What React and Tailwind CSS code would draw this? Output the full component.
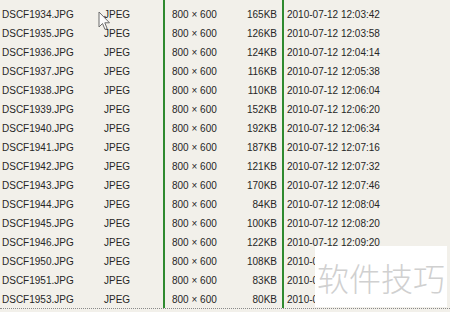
import React from 'react';

const rows = [
  { name: 'DSCF1933.JPG', size: '98KB', time: '12:03:26' },
  { name: 'DSCF1934.JPG', size: '165KB', time: '12:03:42' },
  { name: 'DSCF1935.JPG', size: '126KB', time: '12:03:58' },
  { name: 'DSCF1936.JPG', size: '124KB', time: '12:04:14' },
  { name: 'DSCF1937.JPG', size: '116KB', time: '12:05:38' },
  { name: 'DSCF1938.JPG', size: '110KB', time: '12:06:04' },
  { name: 'DSCF1939.JPG', size: '152KB', time: '12:06:20' },
  { name: 'DSCF1940.JPG', size: '192KB', time: '12:06:34' },
  { name: 'DSCF1941.JPG', size: '187KB', time: '12:07:16' },
  { name: 'DSCF1942.JPG', size: '121KB', time: '12:07:32' },
  { name: 'DSCF1943.JPG', size: '170KB', time: '12:07:46' },
  { name: 'DSCF1944.JPG', size: '84KB', time: '12:08:04' },
  { name: 'DSCF1945.JPG', size: '100KB', time: '12:08:20' },
  { name: 'DSCF1946.JPG', size: '122KB', time: '12:09:20' },
  { name: 'DSCF1950.JPG', size: '108KB', time: '12:10:02' },
  { name: 'DSCF1951.JPG', size: '83KB', time: '12:10:18' },
  { name: 'DSCF1953.JPG', size: '80KB', time: '12:10:46' },
];

export default function App() {
  return (
    <div
      className="relative w-[450px] h-[312px] overflow-hidden bg-[#f2f0ea] text-[#262626] text-[10px]"
      style={{ fontFamily: '"Liberation Sans", Arial, sans-serif' }}
    >
      <div className="-mt-[14px]">
        {rows.map((row, i) => (
          <div
            key={row.name}
            className={`flex h-[19px] items-center ${
              i === rows.length - 1 ? 'border-b border-dotted border-[#8a8a8a]' : ''
            }`}
          >
            <div className="w-[104px] pl-[2px]">{row.name}</div>
            <div className="w-[59px]">JPEG</div>
            <div className="flex h-full w-[121px] items-center justify-between border-x-2 border-[#2f8a2f] pl-[7px] pr-[5px]">
              <span className="whitespace-pre">800 × 600</span>
              <span>{row.size}</span>
            </div>
            <div className="pl-[3px]">2010-07-12 {row.time}</div>
          </div>
        ))}
      </div>

      <svg
        className="absolute left-[98px] top-[11px]"
        width="13"
        height="20"
        viewBox="0 0 13 20"
      >
        <path
          d="M1 1 L1 16 L4.5 12.5 L7 18.5 L9.2 17.6 L6.8 11.8 L11.5 11.8 Z"
          fill="#fafafa"
          stroke="#6b6b6b"
          strokeWidth="1"
          strokeLinejoin="round"
        />
      </svg>

      <div className="absolute left-[315px] top-[246px] flex h-[61px] w-[132px] items-center justify-center bg-white">
        <span
          className="text-[32px] font-light leading-none text-[#d0d0d0]"
          style={{ fontFamily: '"Noto Sans CJK SC", sans-serif' }}
        >
          软件技巧
        </span>
      </div>
    </div>
  );
}
